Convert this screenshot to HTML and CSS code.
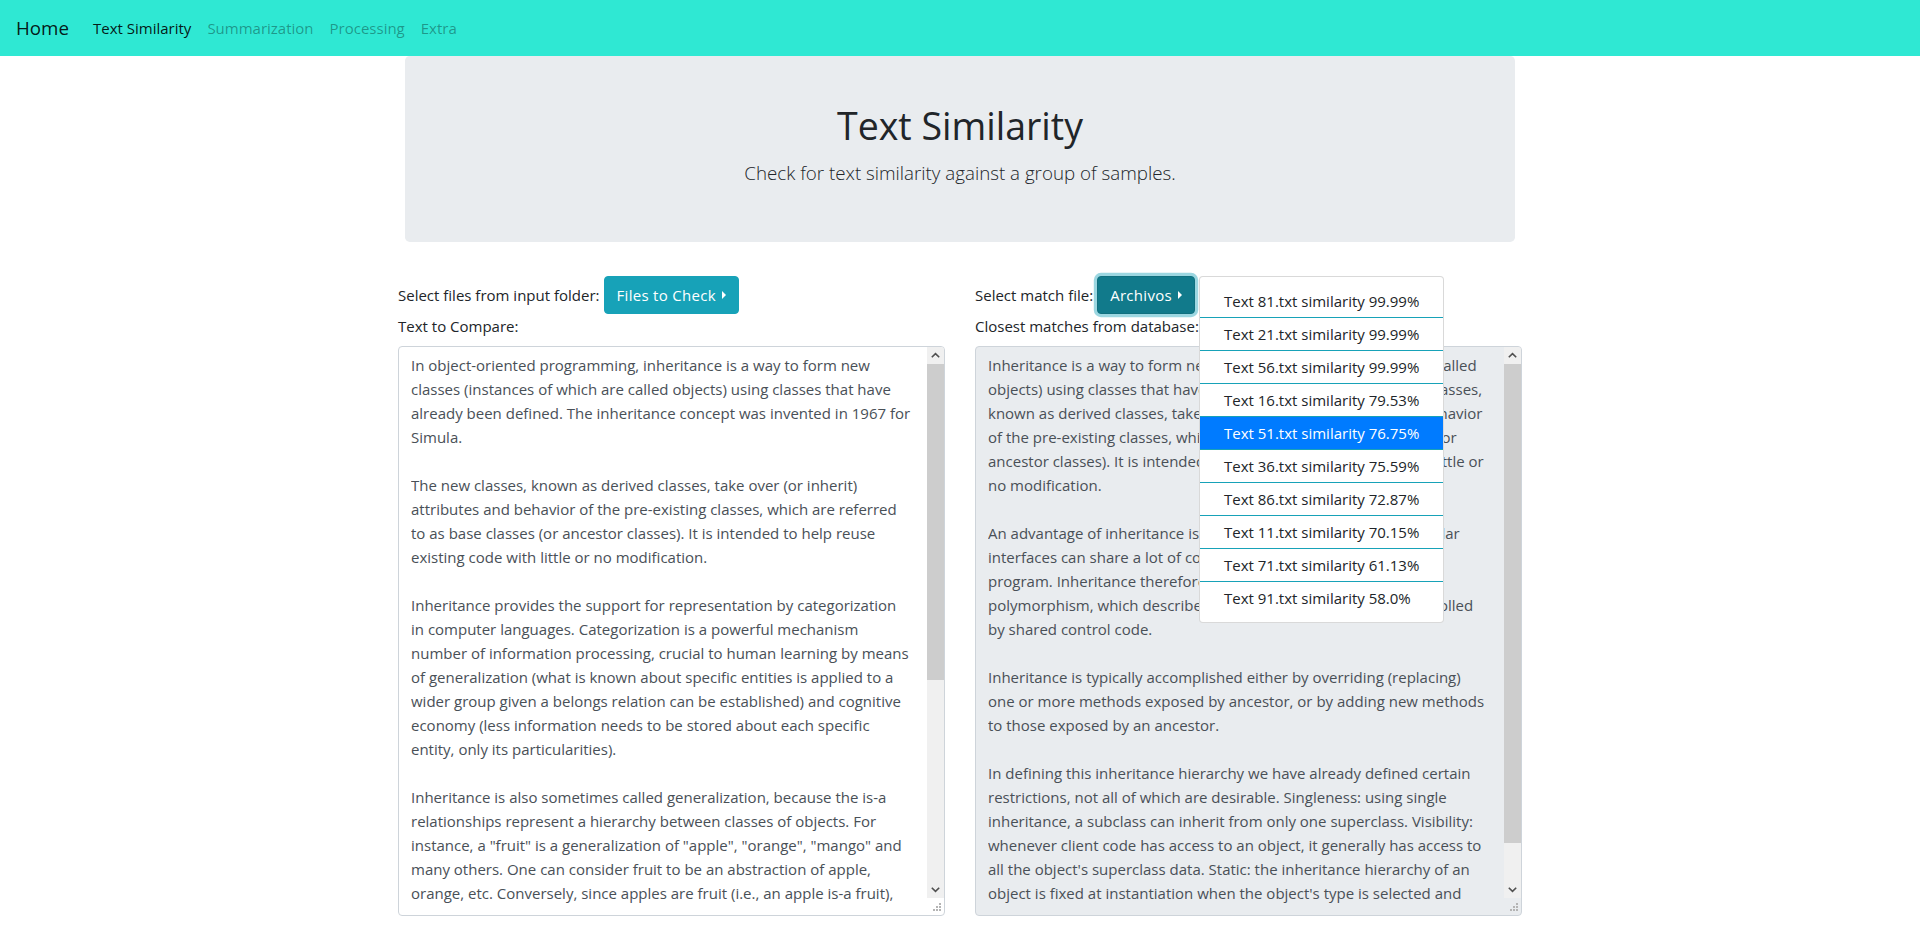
FILE: index.html
```html
<!DOCTYPE html>
<html lang="en">
<head>
<meta charset="utf-8">
<title>Text Similarity</title>
<link rel="stylesheet" href="styles.css">
</head>
<body>
<nav class="navbar">
  <a class="brand" href="#">Home</a>
  <ul class="nav">
    <li><a class="nav-link active" href="#">Text Similarity</a></li>
    <li><a class="nav-link" href="#">Summarization</a></li>
    <li><a class="nav-link" href="#">Processing</a></li>
    <li><a class="nav-link" href="#">Extra</a></li>
  </ul>
</nav>
<main class="container">
  <section class="jumbotron">
    <h1 class="title">Text Similarity</h1>
    <p class="lead">Check for text similarity against a group of samples.</p>
  </section>
  <div class="panels">
    <div class="panel">
      <div class="picker">
        <span class="label">Select files from input folder:</span>
        <div class="dropright">
          <button class="btn btn-info" type="button">Files to Check<span class="caret"></span></button>
        </div>
      </div>
      <label class="field-label" for="t1">Text to Compare:</label>
      <div class="ta-box">
        <textarea id="t1" class="ta">In object-oriented programming, inheritance is a way to form new
classes (instances of which are called objects) using classes that have
already been defined. The inheritance concept was invented in 1967 for
Simula.

The new classes, known as derived classes, take over (or inherit)
attributes and behavior of the pre-existing classes, which are referred
to as base classes (or ancestor classes). It is intended to help reuse
existing code with little or no modification.

Inheritance provides the support for representation by categorization
in computer languages. Categorization is a powerful mechanism
number of information processing, crucial to human learning by means
of generalization (what is known about specific entities is applied to a
wider group given a belongs relation can be established) and cognitive
economy (less information needs to be stored about each specific
entity, only its particularities).

Inheritance is also sometimes called generalization, because the is-a
relationships represent a hierarchy between classes of objects. For
instance, a "fruit" is a generalization of "apple", "orange", "mango" and
many others. One can consider fruit to be an abstraction of apple,
orange, etc. Conversely, since apples are fruit (i.e., an apple is-a fruit),
apples may naturally inherit all the properties common to all fruit,
such as being a fleshy container for the seed of a plant.

Applications of inheritance: Specialization. One common reason to use
inheritance is to create specializations of existing classes or objects.
This is often seen in object type systems. In specialization, the new
class or object has data or behavior aspects that are not part of the
inherited class. For example, a "Bank Account" class might have data
for an "account number", "owner", and "balance". An "Interest Bearing
Account" class might inherit "Bank Account" and then add data for
"interest rate" and "interest accrual" along with behavior for
calculating interest earned.

Another form of specialization occurs when a base class specifies that
it has a particular behavior but does not actually implement it.</textarea>
        <div class="scrollbar" aria-hidden="true">
          <span class="sb-btn"><svg width="17" height="17" viewBox="0 0 17 17"><path d="M4.8 10.3 8.5 6.6 12.2 10.3" fill="none" stroke="#505050" stroke-width="1.6"/></svg></span>
          <span class="sb-track"><span class="sb-thumb" style="height: 316px"></span></span>
          <span class="sb-btn"><svg width="17" height="17" viewBox="0 0 17 17"><path d="M4.8 6.7 8.5 10.4 12.2 6.7" fill="none" stroke="#505050" stroke-width="1.6"/></svg></span>
        </div>
        <span class="resizer" aria-hidden="true"></span>
      </div>
    </div>
    <div class="panel">
      <div class="picker">
        <span class="label">Select match file:</span>
        <div class="dropright">
          <button class="btn btn-info is-open" type="button">Archivos<span class="caret"></span></button>
          <ul class="dropdown-menu">
            <li class="dropdown-item">Text 81.txt similarity 99.99%</li>
            <li class="dropdown-item">Text 21.txt similarity 99.99%</li>
            <li class="dropdown-item">Text 56.txt similarity 99.99%</li>
            <li class="dropdown-item">Text 16.txt similarity 79.53%</li>
            <li class="dropdown-item is-active">Text 51.txt similarity 76.75%</li>
            <li class="dropdown-item">Text 36.txt similarity 75.59%</li>
            <li class="dropdown-item">Text 86.txt similarity 72.87%</li>
            <li class="dropdown-item">Text 11.txt similarity 70.15%</li>
            <li class="dropdown-item">Text 71.txt similarity 61.13%</li>
            <li class="dropdown-item">Text 91.txt similarity 58.0%</li>
          </ul>
        </div>
      </div>
      <label class="field-label" for="t2">Closest matches from database:</label>
      <div class="ta-box ta-box-readonly">
        <textarea id="t2" class="ta" readonly>Inheritance is a way to form new classes (instances of which are called
objects) using classes that have already been defined. The new classes,
known as derived classes, take over (or inherit) attributes and behavior
of the pre-existing classes, which are referred to as base classes (or
ancestor classes). It is intended to help reuse existing code with little or
no modification.

An advantage of inheritance is that modules with sufficiently similar
interfaces can share a lot of code, reducing the complexity of the
program. Inheritance therefore has another view, a dual, called
polymorphism, which describes many pieces of code being controlled
by shared control code.

Inheritance is typically accomplished either by overriding (replacing)
one or more methods exposed by ancestor, or by adding new methods
to those exposed by an ancestor.

In defining this inheritance hierarchy we have already defined certain
restrictions, not all of which are desirable. Singleness: using single
inheritance, a subclass can inherit from only one superclass. Visibility:
whenever client code has access to an object, it generally has access to
all the object's superclass data. Static: the inheritance hierarchy of an
object is fixed at instantiation when the object's type is selected and
does not change with time.
</textarea>
        <div class="scrollbar" aria-hidden="true">
          <span class="sb-btn"><svg width="17" height="17" viewBox="0 0 17 17"><path d="M4.8 10.3 8.5 6.6 12.2 10.3" fill="none" stroke="#505050" stroke-width="1.6"/></svg></span>
          <span class="sb-track"><span class="sb-thumb" style="height: 479px"></span></span>
          <span class="sb-btn"><svg width="17" height="17" viewBox="0 0 17 17"><path d="M4.8 6.7 8.5 10.4 12.2 6.7" fill="none" stroke="#505050" stroke-width="1.6"/></svg></span>
        </div>
        <span class="resizer" aria-hidden="true"></span>
      </div>
    </div>
  </div>
</main>
</body>
</html>
```
FILE: styles.css
```css
* { box-sizing: border-box; }

html, body {
  margin: 0;
  padding: 0;
}

body {
  font-family: "Open Sans", "Noto Sans", sans-serif;
  font-size: 15px;
  line-height: 24px;
  color: #212529;
  background: #ffffff;
}

/* ---------- navbar ---------- */
.navbar {
  display: flex;
  align-items: center;
  height: 56px;
  padding: 8px 16px;
  background: #2fe8d3;
}

.brand {
  font-size: 18.75px;
  line-height: 30px;
  padding: 5px 0;
  margin-right: 16px;
  color: rgba(0, 0, 0, 0.9);
  text-decoration: none;
}

.nav {
  display: flex;
  list-style: none;
  margin: 0;
  padding: 0;
}

.nav-link {
  display: block;
  padding: 8px;
  color: rgba(0, 0, 0, 0.36);
  text-decoration: none;
}

.nav-link.active {
  color: rgba(0, 0, 0, 0.9);
}

/* ---------- layout ---------- */
.container {
  width: 1110px;
  margin: 0 auto;
}

.jumbotron {
  background: #e9ecef;
  border-radius: 4.8px;
  padding: 46px 32px 54px;
  margin-bottom: 34px;
  text-align: center;
}

.title {
  margin: 0 0 8px;
  font-size: 37.5px;
  line-height: 48px;
  font-weight: 400;
  color: #212529;
}

.lead {
  margin: 0;
  font-size: 18.75px;
  line-height: 30px;
  font-weight: 300;
}

.panels {
  display: grid;
  grid-template-columns: 547px 547px;
  column-gap: 30px;
  justify-content: center;
  margin: 0 -7px;
}

.panel {
  display: flex;
  flex-direction: column;
}

.picker {
  display: flex;
  align-items: center;
  gap: 4px;
  height: 38px;
}

.field-label {
  display: block;
  margin-bottom: 8px;
}

/* ---------- buttons & dropdown ---------- */
.dropright {
  position: relative;
}

.btn {
  display: inline-flex;
  align-items: center;
  height: 38px;
  padding: 6px 12px;
  font-family: inherit;
  font-size: 15px;
  line-height: 24px;
  letter-spacing: 0.3px;
  border: 1px solid transparent;
  border-radius: 4px;
  cursor: pointer;
}

.btn-info {
  color: #ffffff;
  background: #17a2b8;
  border-color: #17a2b8;
}

.btn-info.is-open {
  background: #117a8b;
  border-color: #10707f;
  box-shadow: 0 0 0 3.2px rgba(58, 176, 195, 0.5);
}

.caret {
  display: inline-block;
  margin-left: 6px;
  width: 0;
  height: 0;
  border-top: 4.5px solid transparent;
  border-bottom: 4.5px solid transparent;
  border-left: 4.5px solid currentColor;
}

.dropdown-menu {
  position: absolute;
  top: 0;
  left: 100%;
  margin: 0 0 0 4px;
  padding: 8px 0;
  list-style: none;
  background: #ffffff;
  border: 1px solid rgba(0, 0, 0, 0.15);
  border-radius: 4px;
  z-index: 10;
  white-space: nowrap;
}

.dropdown-item {
  display: block;
  padding: 4px 24px;
  line-height: 24px;
  color: #212529;
}

.dropdown-item + .dropdown-item {
  border-top: 1px solid #17a2b8;
}

.dropdown-item.is-active {
  background: #007bff;
  color: #ffffff;
}

/* ---------- textareas ---------- */
.ta-box {
  position: relative;
  height: 570px;
  padding: 6px 29px 6px 12px;
  background: #ffffff;
  border: 1px solid #ced4da;
  border-radius: 4px;
  overflow: hidden;
}

.ta-box-readonly {
  background: #e9ecef;
}

.ta {
  display: block;
  width: 100%;
  height: 552px;
  margin: 0;
  padding: 0;
  font-family: "Open Sans", "Noto Sans", sans-serif;
  font-size: 15px;
  line-height: 24px;
  color: #495057;
  background: transparent;
  border: 0;
  outline: none;
  resize: none;
  overflow: hidden;
}

.scrollbar {
  position: absolute;
  top: 0;
  right: 0;
  bottom: 17px;
  width: 17px;
  display: flex;
  flex-direction: column;
  background: #f0f0f0;
}

.sb-btn {
  flex: none;
  display: block;
  width: 17px;
  height: 17px;
}

.sb-btn svg {
  display: block;
}

.sb-track {
  flex: 1;
  display: block;
}

.sb-thumb {
  display: block;
  width: 17px;
  background: #cdcdcd;
}

.resizer {
  position: absolute;
  right: 0;
  bottom: 0;
  width: 17px;
  height: 17px;
  background:
    linear-gradient(#b4b4b4, #b4b4b4) 12px 5px / 2px 2px no-repeat,
    linear-gradient(#b4b4b4, #b4b4b4) 9px 8px / 2px 2px no-repeat,
    linear-gradient(#b4b4b4, #b4b4b4) 12px 8px / 2px 2px no-repeat,
    linear-gradient(#b4b4b4, #b4b4b4) 6px 11px / 2px 2px no-repeat,
    linear-gradient(#b4b4b4, #b4b4b4) 9px 11px / 2px 2px no-repeat,
    linear-gradient(#b4b4b4, #b4b4b4) 12px 11px / 2px 2px no-repeat;
}
```
